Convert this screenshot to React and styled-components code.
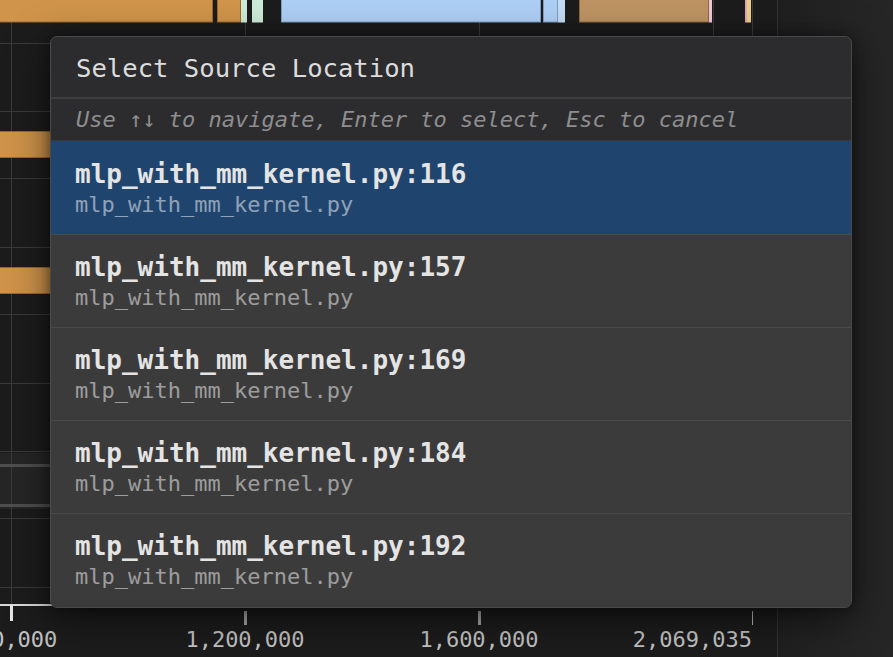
import React from "react"
import styled, { createGlobalStyle } from "styled-components"

const GlobalStyle = createGlobalStyle`
  html, body {
    margin: 0;
    padding: 0;
    background: #1c1c1c;
  }
  body {
    font-family: "DejaVu Sans Mono", "Liberation Mono", monospace;
  }
`

const locations = [
  { line: 116, file: "mlp_with_mm_kernel.py" },
  { line: 157, file: "mlp_with_mm_kernel.py" },
  { line: 169, file: "mlp_with_mm_kernel.py" },
  { line: 184, file: "mlp_with_mm_kernel.py" },
  { line: 192, file: "mlp_with_mm_kernel.py" },
]

// top row of trace slices: [x, width, fill, stroke]
const topBars = [
  [-2, 215, "#d0944a", "#9c6a30"],
  [217, 24, "#d0944a", "#9c6a30"],
  [241, 6, "#cdebd8", "#cdebd8"],
  [252, 11, "#cdebd8", "#cdebd8"],
  [281, 260, "#aecff5", "#7f9dbf"],
  [543, 15, "#aecff5", "#7f9dbf"],
  [558, 7, "#c4dcf6", "#c4dcf6"],
  [579, 130, "#bd9363", "#8c6a40"],
  [709, 3, "#f0c8dc", "#f0c8dc"],
  [745, 2, "#e8a4b4", "#e8a4b4"],
  [747, 4, "#ead08a", "#ead08a"],
]

const gridX = [11, 245, 479, 713, 752]
const gridY = [43, 111, 178, 247, 314, 383, 451, 518, 587]

const ticks = [
  { x: 11, label: "800,000", anchor: "middle", w: 3, h: 16, color: "#e6e6e6", top: 605 },
  { x: 245, label: "1,200,000", anchor: "middle", w: 3, h: 14, color: "#a8a8a8", top: 611 },
  { x: 479, label: "1,600,000", anchor: "middle", w: 3, h: 14, color: "#a8a8a8", top: 611 },
  { x: 752, label: "2,069,035", anchor: "end", w: 1, h: 14, color: "#bdbdbd", top: 611 },
]

const TimelineChart = () => (
  <ChartSvg width="777" height="657" viewBox="0 0 777 657">
    <rect x="0" y="0" width="777" height="657" fill="#1c1c1c" />
    <rect x="0" y="453" width="777" height="56" fill="#262626" />
    {gridX.map((x) => (
      <line key={x} x1={x + 0.5} y1="0" x2={x + 0.5} y2="604" stroke="#3c3c3c" />
    ))}
    {gridY.map((y) => (
      <line key={y} x1="0" y1={y + 0.5} x2="777" y2={y + 0.5} stroke="#3a3a3a" />
    ))}
    <rect x="0" y="464" width="777" height="3" fill="#4e4e4e" />
    <rect x="0" y="504" width="777" height="3" fill="#4e4e4e" />
    {topBars.map(([x, w, fill, stroke], i) => (
      <rect key={i} x={x + 0.5} y="-1" width={w - 1} height="23" fill={fill} stroke={stroke} />
    ))}
    <rect x="-2" y="131.5" width="300" height="26" fill="#cf9349" stroke="#9c6a30" />
    <rect x="-2" y="267.5" width="300" height="26" fill="#cf9349" stroke="#9c6a30" />
    <line x1="0" y1="605" x2="777" y2="605" stroke="#d8d8d8" strokeWidth="2" />
    {ticks.map((t) => (
      <g key={t.x}>
        <rect x={t.x - Math.floor(t.w / 2)} y={t.top} width={t.w} height={t.h} fill={t.color} />
        <AxisLabel x={t.x} y="647" textAnchor={t.anchor}>
          {t.label}
        </AxisLabel>
      </g>
    ))}
  </ChartSvg>
)

const App = () => {
  return (
    <>
      <GlobalStyle />
      <Page>
        <Timeline>
          <TimelineChart />
        </Timeline>
        <SidePanel />
        <Dialog>
          <DialogHeader>
            <DialogTitle>Select Source Location</DialogTitle>
          </DialogHeader>
          <Hint>Use ↑↓ to navigate, Enter to select, Esc to cancel</Hint>
          <List>
            {locations.map((loc, i) => (
              <Item key={loc.line} $selected={i === 0}>
                <ItemTitle>
                  {loc.file}:{loc.line}
                </ItemTitle>
                <ItemFile>{loc.file}</ItemFile>
              </Item>
            ))}
          </List>
        </Dialog>
      </Page>
    </>
  )
}

export default App

const Page = styled.div`
  position: relative;
  display: flex;
  width: 893px;
  height: 657px;
  overflow: hidden;
  background: #1c1c1c;
`

const Timeline = styled.div`
  width: 777px;
  height: 100%;
  border-right: 1px solid #333;
  flex-shrink: 0;
`

const ChartSvg = styled.svg`
  display: block;
`

const AxisLabel = styled.text`
  font-family: "DejaVu Sans Mono", monospace;
  font-size: 22px;
  fill: #c4c4c4;
`

const SidePanel = styled.div`
  flex: 1;
  background: linear-gradient(90deg, #1f1f1f 0%, #232323 40%, #262626 100%);
`

const Dialog = styled.div`
  position: absolute;
  left: 50px;
  top: 36px;
  width: 802px;
  box-sizing: border-box;
  border: 1px solid #4a4a4a;
  border-radius: 7px;
  overflow: hidden;
  background: #2c2c2e;
  box-shadow: 0 10px 40px rgba(0, 0, 0, 0.55), 0 0 12px rgba(0, 0, 0, 0.4);
`

const DialogHeader = styled.div`
  display: flex;
  align-items: center;
  height: 62px;
  padding: 2px 25px 0;
  box-sizing: border-box;
  border-bottom: 2px solid #3e3e3e;
`

const DialogTitle = styled.h2`
  margin: 0;
  font-size: 25.6px;
  line-height: 30px;
  font-weight: 500;
  color: #dcdcdc;
`

const Hint = styled.div`
  padding: 8px 24px 7px 25px;
  font-size: 22px;
  line-height: 26px;
  font-style: italic;
  color: #8e8e8e;
  border-bottom: 1px solid #3a3a3a;
`

const List = styled.div`
  display: flex;
  flex-direction: column;
  padding-bottom: 1px;
  background: #3b3b3b;
`

const Item = styled.div`
  display: flex;
  flex-direction: column;
  padding: 17px 24px 16px;
  background: ${(p) => (p.$selected ? "#1f456f" : "#3b3b3b")};
  border-top: 1px solid ${(p) => (p.$selected ? "#1f456f" : "#4a4a4a")};
  cursor: pointer;
`

const ItemTitle = styled.div`
  font-size: 26px;
  line-height: 30px;
  font-weight: bold;
  color: #e4e4e4;
`

const ItemFile = styled.div`
  margin-top: 3px;
  font-size: 22px;
  line-height: 26px;
  color: rgba(255, 255, 255, 0.5);
`
